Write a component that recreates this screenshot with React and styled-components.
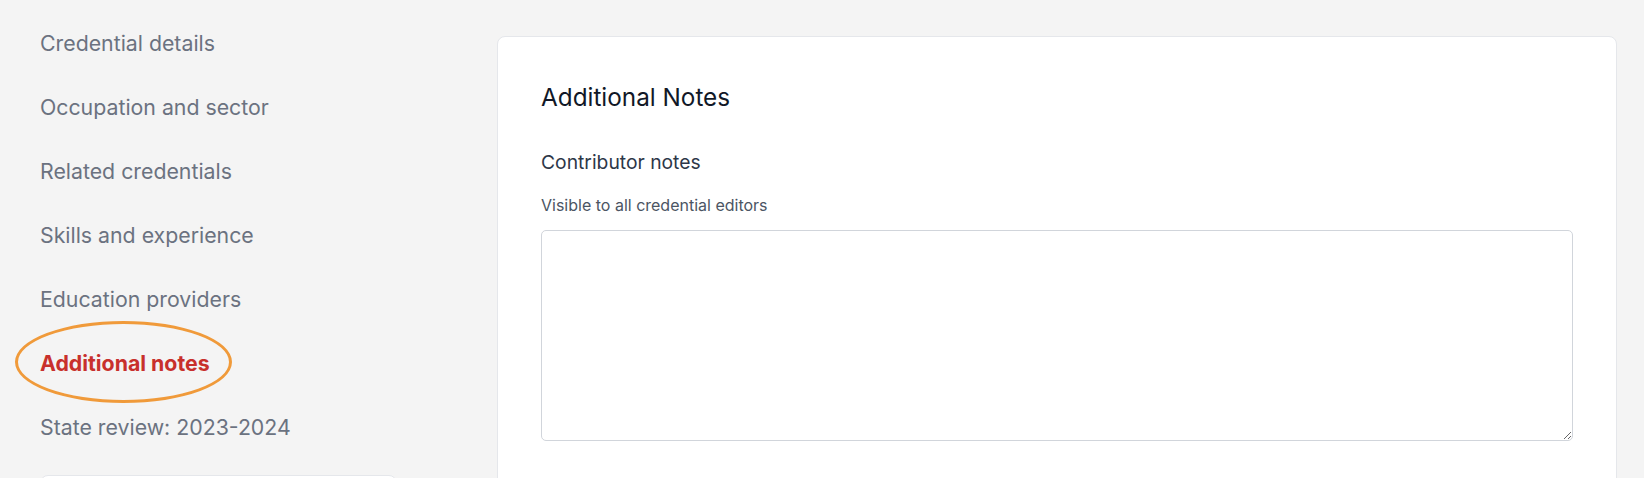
import styled, { createGlobalStyle } from "styled-components";

const GlobalStyle = createGlobalStyle`
  html, body {
    margin: 0;
    padding: 0;
    background: #f4f4f4;
    font-family: Inter, "Noto Sans", sans-serif;
    overflow: hidden;
  }
`;

const Page = styled.div`
  display: flex;
  align-items: flex-start;
  padding: 0 27px 0 40px;
  height: 478px;
  box-sizing: border-box;
  overflow: hidden;
`;

const Sidebar = styled.aside`
  width: 357px;
  flex-shrink: 0;
  padding-top: 11px;
  display: flex;
  flex-direction: column;
`;

const NavItem = styled.div`
  position: relative;
  height: 64px;
  line-height: 64px;
  font-size: 21.3px;
  font-weight: ${(p) => (p.$active ? 700 : 400)};
  color: ${(p) => (p.$active ? "#c8302c" : "#6b7280")};
  white-space: nowrap;
`;

const Circle = styled.span`
  position: absolute;
  left: -25px;
  top: -10px;
  width: 217px;
  height: 82px;
  box-sizing: border-box;
  border: 3px solid #f09a3a;
  border-radius: 50%;
  pointer-events: none;
`;

const SideCard = styled.div`
  margin-top: 16px;
  height: 60px;
  background: #fff;
  border: 1px solid #e5e7eb;
  border-radius: 8px;
`;

const Main = styled.main`
  flex: 1;
  margin-left: 100px;
  padding-top: 36px;
`;

const Card = styled.section`
  background: #fff;
  border: 1px solid #e5e7eb;
  border-radius: 8px;
  padding: 43px 43px 60px;
  display: flex;
  flex-direction: column;
`;

const Heading = styled.h2`
  margin: 0;
  font-size: 24.3px;
  line-height: 34px;
  font-weight: 400;
  color: #111827;
`;

const Label = styled.label`
  margin-top: 34px;
  font-size: 19.3px;
  line-height: 28px;
  font-weight: 400;
  color: #2d3748;
`;

const Hint = styled.p`
  margin: 18px 0 0;
  font-size: 16px;
  line-height: 22px;
  color: #4b5563;
`;

const NotesInput = styled.textarea`
  margin-top: 14px;
  height: 211px;
  box-sizing: border-box;
  border: 1px solid #d1d5db;
  border-radius: 5px;
  font-family: inherit;
  font-size: 16px;
  padding: 10px 12px;
  outline: none;
`;

const items = [
  "Credential details",
  "Occupation and sector",
  "Related credentials",
  "Skills and experience",
  "Education providers",
  "Additional notes",
  "State review: 2023-2024",
];

export default function App() {
  return (
    <>
      <GlobalStyle />
      <Page>
        <Sidebar>
          {items.map((label) => {
            const active = label === "Additional notes";
            return (
              <NavItem key={label} $active={active}>
                {label}
                {active && <Circle />}
              </NavItem>
            );
          })}
          <SideCard />
        </Sidebar>
        <Main>
          <Card>
            <Heading>Additional Notes</Heading>
            <Label htmlFor="notes">Contributor notes</Label>
            <Hint>Visible to all credential editors</Hint>
            <NotesInput id="notes" />
          </Card>
        </Main>
      </Page>
    </>
  );
}
